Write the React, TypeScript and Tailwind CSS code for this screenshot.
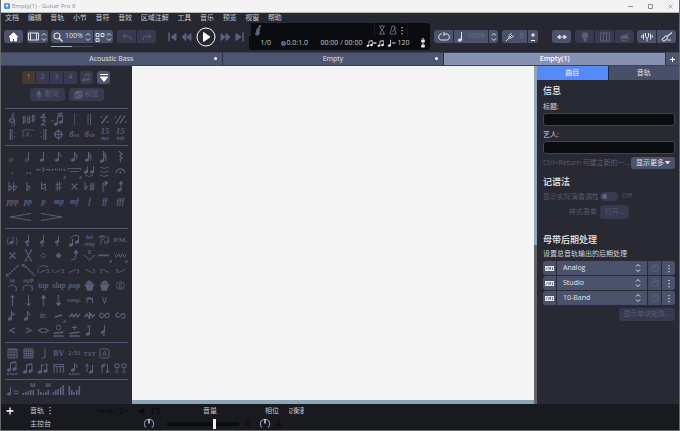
import { ReactNode, useState } from "react";
import clsx from "clsx";

type Glyph = { label: string; icon: ReactNode };

const Icon = ({
  children,
  className = "size-[15px]",
  box = "0 0 15 15",
}: {
  children: ReactNode;
  className?: string;
  box?: string;
}) => (
  <svg
    viewBox={box}
    className={clsx("shrink-0", className)}
    fill="none"
    stroke="currentColor"
    strokeWidth="1"
    aria-hidden="true"
  >
    {children}
  </svg>
);

const Note = ({
  x = 6,
  y = 11,
  stem = 8,
  flags = 0,
  open = false,
}: {
  x?: number;
  y?: number;
  stem?: number;
  flags?: number;
  open?: boolean;
}) => (
  <g>
    <ellipse
      cx={x}
      cy={y}
      rx="2"
      ry="1.4"
      transform={`rotate(-20 ${x} ${y})`}
      fill={open ? "none" : "currentColor"}
      strokeWidth={open ? 0.9 : 0.4}
    />
    {stem > 0 && <path d={`M${x + 1.5} ${y}v${-stem}`} strokeWidth="1" />}
    {Array.from({ length: flags }).map((_, i) => (
      <path
        key={i}
        d={`M${x + 1.5} ${y - stem + i * 1.8}q.5 2 2.4 3q.4 1-.3 2`}
        strokeWidth="1"
      />
    ))}
  </g>
);

const Beamed = () => (
  <g>
    <Note x={4} y={11} stem={7} />
    <Note x={9.5} y={10} stem={7} />
    <path d="M5.5 4L11 3" strokeWidth="1.4" />
  </g>
);

const g = (label: string, children: ReactNode): Glyph => ({
  label,
  icon: <Icon>{children}</Icon>,
});

const t = (label: string, className = "text-[8px] italic"): Glyph => ({
  label,
  icon: <span className={clsx("font-bold leading-none", className)}>{label}</span>,
});

const ottava = (num: string, sub: string): Glyph => ({
  label: num + sub,
  icon: (
    <span className="text-[9px] font-bold italic leading-none">
      {num}
      <span className="text-[6px]">{sub}</span>
    </span>
  ),
});

const stacked = (top: string, bottom: string, className = "text-[7px]"): Glyph => ({
  label: `${top} ${bottom}`,
  icon: (
    <span className="flex flex-col items-center text-[6px] font-bold italic leading-[7px]">
      <span className={clsx("leading-[7px]", className)}>{top}</span>
      <span>{bottom}</span>
    </span>
  ),
});

const hand = (
  <path
    d="M4 8L2.8 6.2M5 8V3.5M6.6 7V2.5M8.3 7V2.8M10 8V4M4 8h6.7L12 6.5M4.5 8.5h6l-.8 3.5H5.6z"
    strokeWidth="1.4"
    fill="currentColor"
  />
);

const bars = (heights: number[]) => (
  <g>
    {heights.map((h, i) => (
      <rect
        key={i}
        x={1.5 + i * 2.5}
        y={12 - h}
        width="1.6"
        height={h}
        fill="currentColor"
        stroke="none"
      />
    ))}
  </g>
);

const masterBars = (label: string, heights: number[]): Glyph => ({
  label,
  icon: (
    <span className="relative">
      <Icon>{bars(heights)}</Icon>
      <span className="absolute -top-px right-0 font-['Noto_Sans',sans-serif] text-[6px] font-bold leading-[6px]">
        M
      </span>
    </span>
  ),
});

const corner = <path d="M14.5 11.5v3h-3z" fill="currentColor" stroke="none" />;

const signatures: Glyph[] = [
  g("Clef", <path d="M8.2 9.5a1.5 1.5 0 1 0-2.5-1c0 2.5 4 2.5 4-.2 0-2.8-5.4-3-5.4.5 0 3.500 5.500 3 4.900-.3L7.600 2.700c0-2 1.800-2 1.400 0C8.700 4.500 5 5.500 4.300 8.500M9.200 8.500l.4 4c0 1.800-3 1.800-2.800 0" strokeWidth=".9" />),
  g("Key signature", <path d="M2.5 4v8M4 3.5v8M1.2 6.5l4-1M1.2 9.8l4-1M7 4v8M8.500 3.500v8M5.800 7.500l4-1M5.800 10.300l4-1M11.500 2.500v8M13 2v8M10.300 5.500l4-1M10.300 8.500l4-1" strokeWidth=".9" />),
  g("Time signature", <path d="M8 7V2L5 5.5h5M6 9c1-1.5 3.5-1 3 .5S6.5 12 5.500 13h4.500M8 7v1" strokeWidth="1.2" />),
  g("Triplet feel", <g><path d="M0 9h3" /><Note x={5} y={12} stem={7} /><Note x={10} y={10} stem={7} /><path d="M6.5 5l5-2M6.500 2.500l5-1.500" strokeWidth="1.4" /></g>),
  g("Free time", <path d="M7.5 2v11" strokeDasharray="1.5 1" />),
  g("Double bar", <path d="M6 2v11M8.5 2v11" strokeWidth=".9" />),
  g("Simile", <g><path d="M4.5 11.5l6-8" strokeWidth="1.4" /><circle cx="4.5" cy="5" r=".6" /><circle cx="10.5" cy="10" r=".6" /></g>),
  g("Double simile", <g><path d="M3 11.5l5-8M7 11.5l5-8" strokeWidth="1.4" /><circle cx="2.5" cy="5" r=".6" /><circle cx="12.5" cy="10" r=".6" /></g>),
  g("Repeat open", <g><path d="M5.5 2v11" strokeWidth="1.6" /><path d="M7.5 2v11" strokeWidth=".6" /><path d="M9.5 5v1.2M9.5 9v1.2" /></g>),
  g("Alternate ending", <g><path d="M2 10V3h11" strokeWidth=".8" /><path d="M5 5.5l3 4M8 5.5l-3 4M10 9h1" strokeWidth=".9" /></g>),
  g("Repeat close", <g><path d="M9.5 2v11" strokeWidth="1.6" /><path d="M7.5 2v11" strokeWidth=".6" /><path d="M5 5v1.2M5 9v1.2" /></g>),
  g("Coda", <g><circle cx="7.5" cy="7.5" r="3.3" strokeWidth="1.3" /><path d="M7.5 2v11M2.5 7.5h10" strokeWidth=".9" /></g>),
  ottava("8", "va"),
  ottava("8", "vb"),
  stacked("15", "ma", "text-[9px]"),
  stacked("15", "mb", "text-[9px]"),
];

const notes: Glyph[] = [
  g("Whole", <Note open stem={0} />),
  g("Half", <Note open />),
  g("Quarter", <Note />),
  g("Eighth", <Note flags={1} />),
  g("Sixteenth", <Note flags={2} />),
  g("Thirty-second", <Note x={5} flags={3} />),
  g("Sixty-fourth", <Note x={5} y={12} stem={10} flags={4} />),
  g("Rest", <path d="M6 2l3 3-2 2 2.5 3c-2-1-3.5.5-1.5 3" strokeWidth="1.3" />),
  g("Dotted", <circle cx="7.5" cy="9" r=".6" fill="currentColor" />),
  g("Double dotted", <path d="M5 9h1.6M8.5 9h1.6" strokeWidth="1.6" />),
  g("Triplet", <path d="M1 7V5.500h3.500M10 5.500h3.500V7M6 4h2.500L7 5.500c2 0 1.500 2-1 1.500" />),
  g("Tuplet", <g><path d="M1 7V5.500h2M12 5.500h2V7M4.500 4.500v2M6.500 4.500v2M8.500 4.500v2M10.500 4.500v2" />{corner}</g>),
  g("Custom tuplet", <g><path d="M1 6.5V4.500h13v2M3 7.500h9" strokeWidth=".8" />{corner}</g>),
  g("Tie", <g><Note x={4} y={8} stem={6} /><Note x={10} y={8} stem={6} /><path d="M3 11q4 3 8 0" strokeWidth=".8" /></g>),
  g("Tie beat", <path d="M3 3q4 3 8.500 0M3 7q4 3 8.500 0M3 11q4 3 8.500 0" strokeWidth=".9" />),
  g("Fermata", <g><path d="M3 9c1-5.500 8-5.500 9 0" strokeWidth="1.100" /><circle cx="7.5" cy="8.5" r=".7" fill="currentColor" /></g>),
  g("Double flat", <path d="M4 3v8.500c3-1.500 4-4 2-4.500l-2 1M8.500 3v8.500c3-1.500 4-4 2-4.500l-2 1" strokeWidth="1.1" />),
  g("Flat", <path d="M6 3v8.500c3-1.500 4-4 2-4.500l-2 1" strokeWidth="1.1" />),
  g("Natural", <path d="M5.500 3v7l4-1.500M9.500 12V5l-4 1.500" strokeWidth="1.1" />),
  g("Sharp", <path d="M6.200 3v9M8.500 2.500v9M4.500 6l6-1.200M4.500 9.500l6-1.200" />),
  g("Double sharp", <path d="M5 5l5 5M10 5l-5 5M4.500 5h1.500M9 5h1.500M4.500 10h1.500M9 10h1.500" strokeWidth="1.100" />),
  g("Accidental", <path d="M3 3v8c2.500-1.500 3-4 1.500-4L3 8M9 4v8M11 3.500v8M7.500 7l5-1M7.500 10l5-1" />),
  g("Stem up", <g><path d="M6 13V4h4M6 6.500h3" /><path d="M8.500 2L11 4 8.500 6z" fill="currentColor" /></g>),
  g("Stem down", <g><Note x={6.5} y={11} stem={7} /><path d="M6.500 5l1.500-3 1.500 3z" fill="currentColor" /></g>),
  t("ppp"), t("pp"), t("p"), t("mp"), t("mf"), t("f"), t("ff"), t("fff"),
];

const effects: Glyph[] = [
  g("Ghost note", <g><Note x={6.5} y={9.5} stem={6} /><path d="M3.500 4q-2.500 4 0 8M11 4q2.500 4 0 8" strokeWidth=".8" /></g>),
  g("Accent", <g><Note y={9} stem={7} /><path d="M5 11l3 1-3 1" strokeWidth=".8" /></g>),
  g("Heavy accent", <g><Note y={9} stem={7} /><path d="M5 13.500l1.500-2.500 1.500 2.500" strokeWidth=".8" /></g>),
  g("Staccato", <g><Note y={9} stem={6} /><circle cx="6.5" cy="12" r=".6" fill="currentColor" /></g>),
  g("Legato", <g><Note x={4} y={12} stem={6} /><Note x={10} y={9} stem={6} /><path d="M3.500 5q3-4 8-2.500" strokeWidth=".9" /></g>),
  stacked("let", "ring"),
  g("Pedal", <path d="M3 12c2-2 1-6 1-8 4-2 4 3 1 3M7 9c2-2 2-1 1 0s0 3 2 1M11 5c2 3 0 6-1 5s1-3 2-2M1 5c2-3 5-3 11 0" strokeWidth=".9" />),
  t("P.M.", "text-[7px]"),
  g("Dead note", <path d="M5 5l5 5M10 5l-5 5M4.500 5h1.500M9 5h1.500M4.500 10h1.500M9 10h1.500" strokeWidth="1.300" />),
  g("Mute", <path d="M4.500 2l6 11M10.500 2l-6 11M3.500 2h2M9.500 2h2M3.500 13h2M9.500 13h2" strokeWidth="1.100" />),
  g("Natural harmonic", <path d="M7.500 5l2.500 2.500-2.500 2.500L5 7.500z" strokeWidth=".9" />),
  g("Artificial harmonic", <path d="M7.500 5l2.500 2.500-2.500 2.500L5 7.500z" fill="currentColor" />),
  g("Bend", <g><path d="M4 12c4 0 5-2 5-8" strokeWidth="1.200" /><path d="M7 5l2-3 2 3z" fill="currentColor" /></g>),
  g("Whammy bar", <path d="M6 2l3 4M9 2L6 6M2 7l5.500 5L13 7" />),
  g("Vibrato", <g><path d="M1.500 8l1.500-1.500 1.500 1.500 1.500-1.500 1.500 1.500 1.500-1.500 1.500 1.500 1.500-1.500" strokeWidth="1.200" />{corner}</g>),
  g("Wide vibrato", <g><path d="M1.500 5.500l2 4 2-4 2 4 2-4 2 4 2-4" />{corner}</g>),
  g("Slide in below", <path d="M4 11L14 2M1 11l2.500 3M3.500 11L1 14" strokeDasharray="2.5 .6" strokeWidth="1.300" />),
  g("Slide in above", <path d="M4 3l10 10M1 1l2.500 3M3.500 1L1 4" strokeDasharray="2.5 .6" strokeWidth="1.300" />),
  g("Legato slide", <path d="M2 6v4M4 9.500l6-2.500M11 6.500q3 0 1 1.500 2 1.500-1 2M3 4q4-3 9 0" strokeWidth=".9" />),
  g("Shift slide", <path d="M2 6v4M4 9.500l6-2.500M11 6.500q3 0 1 1.500 2 1.500-1 2" strokeWidth=".9" />),
  g("Slide in", <path d="M2 9.500l7-3M10 6.500q3 0 1 1.500 2 1.500-1 2" strokeWidth=".9" />),
  g("Slide down in", <path d="M3 6l7 3.500M11 6.500q3 0 1 1.500 2 1.500-1 2" strokeWidth=".9" />),
  g("Slide out down", <path d="M3 6.500q3 0 1 1.500 2 1.500-1 2M6 6.500l6 3" strokeWidth=".9" />),
  g("Slide out up", <path d="M3 6.500q3 0 1 1.500 2 1.500-1 2M6 9.500l6-3" strokeWidth=".9" />),
  g("Hammer on", <path d="M6 1v4M9 1v4M6 3h3M3 9q4-4 8 0M10 9.500q3 0 1 1.500 2 1.500-1 2" strokeWidth=".9" />),
  g("Pull off", <path d="M3 1v4M6 1v4M3 3h3M7 5l2-4M10 5V1h2v2h-2M2 9q5-4 10 0M2 9v4M10 9.500q3 0 1 1.500 2 1.500-1 2" strokeWidth=".9" />),
  t("tap"), t("slap"), t("pop"),
  g("Left hand", hand),
  g("Right hand", <g transform="translate(15 0) scale(-1 1)">{hand}</g>),
  g("String number", <g><circle cx="7.5" cy="7.5" r="4" strokeWidth=".8" /><path d="M9 5q-3 0-3 3.500a1.500 1.300 0 1 0 1.500-1" strokeWidth=".9" /></g>),
  g("Arpeggio up", <path d="M7.500 13V3M5.500 5l2-3 2 3" />),
  g("Arpeggio down", <path d="M7.500 2v10M5.500 10l2 3 2-3" />),
  g("Brush up", <g><path d="M7.500 13V4" strokeDasharray="1.5 .6" strokeWidth="1.6" /><path d="M5.500 5l2-3 2 3z" fill="currentColor" /></g>),
  g("Brush down", <g><path d="M7.500 2v9" strokeDasharray="1.5 .6" strokeWidth="1.6" /><path d="M5.500 10l2 3 2-3z" fill="currentColor" /></g>),
  t("rasg.", "text-[7px] italic"),
  g("Pick down", <g><path d="M5 10V5.500h5.500V10" /><path d="M5 5.500h5.500" strokeWidth="2" /></g>),
  g("Pick up", <path d="M5.500 4l2 6.500 2-6.500" />),
  { label: "", icon: null },
  g("Grace note before", <g><Note x={5} flags={1} /><path d="M3.500 8.500l7-3" strokeWidth=".7" /></g>),
  g("Grace note", <Note x={5} flags={1} />),
  t("tr.", "text-[8px] italic"),
  g("Tremolo", <g><path d="M4 9l7-2" strokeWidth="1.700" />{corner}</g>),
  g("Upper mordent", <path d="M2.500 9l2.500-3 1.500 3 2.500-3 1.500 3 2.500-3" strokeWidth="1.400" />),
  g("Lower mordent", <path d="M2.500 9l2.500-3 1.500 3 2.500-3 1.500 3 2.500-3M7.500 4v7" strokeWidth="1.300" />),
  g("Turn", <path d="M7.500 7.500C5 4 2.500 5 3 8s3 2 4.500-.5S12 4 12 7s-2.500 4-4.500.5z" strokeWidth="1.200" />),
  g("Inverted turn", <path d="M6 5.500C4 4 3 6 3 7.500c0 2 3 2.500 4.500 0S12 5 12 7.500 10 11 8.500 9.500" strokeWidth="1.200" />),
  g("Crescendo", <path d="M10 5L5 7.500 10 10" strokeWidth="1.200" />),
  g("Decrescendo", <path d="M5 5l5 2.500L5 10" strokeWidth="1.200" />),
  g("Swell", <path d="M7 5L2.500 7.500 7 10M8 5l4.500 2.500L8 10" strokeWidth="1.100" />),
  g("Pedal open", <g><circle cx="7.5" cy="4.500" r="2.300" /><path d="M2.500 10.500L12.500 9M2.500 13h10" strokeWidth="1.600" /></g>),
  g("Pedal closed", <g><path d="M7.500 2v5M5 4.500h5" /><path d="M2.500 10.500L12.500 9M2.500 13h10" strokeWidth="1.600" /></g>),
  g("Golpe up", <g><Note y={11} stem={6} /><path d="M5.500 2l3 3M8.500 2l-3 3" /></g>),
  g("Golpe down", <g><Note y={9} stem={7} /><path d="M5.500 11l2.500 2.500M8 11l-2.500 2.500" strokeWidth=".8" /></g>),
];

const texts: Glyph[] = [
  g("Chord", <path d="M3 3h9v9H3zM6 3v9M9 3v9M3 6h9M3 9h9M3 3.500h9" />),
  g("Diagram", <path d="M3 3h9v9H3zM5.200 3v9M7.500 3v9M9.800 3v9M3 5.200h9M3 7.500h9M3 9.800h9" />),
  g("Slash", <path d="M9 2.500v8.500l-3 1.500" strokeWidth="1.100" />),
  t("BV", "text-[8px]"),
  t("2:51", "text-[7px]"),
  t("TXT", "text-[6px]"),
  g("Section", <g><rect x="3" y="3" width="9" height="9" rx="1.500" /><path d="M5.500 10l2-5 2 5M6.300 8.300h2.500" strokeWidth=".9" /></g>),
  { label: "", icon: null },
  g("Auto beam", <g><g transform="translate(0 -2)"><Beamed /></g><path d="M2 13h11" strokeWidth="1.6" strokeDasharray="2 .7" /></g>),
  g("Beam", <Beamed />),
  g("Break beam", <g><Note x={4} y={11} stem={7} /><Note x={9.5} y={10} stem={7} /><path d="M5.500 4h2M9 3.500h2" strokeWidth="1.400" /></g>),
  g("Beam secondary", <path d="M3 3.500h9.500M3 5.500h9.500M3 3v9M6 5v7M9.300 5v7M12.300 3v9" />),
  g("Auto stem", <g><Note x={6} y={9} stem={7} flags={1} /><path d="M2 13h11" strokeWidth="1.6" strokeDasharray="2 .7" /></g>),
  g("Stem upward", <g><path d="M5 11V4M3.500 5.500L5 3l1.500 2.500" /><Note x={9} y={11} stem={7} /></g>),
  g("Stem downward", <g><path d="M5 12V4l4-1M10.500 3v8M9 9.500l1.500 2.500L12 9.500" /><ellipse cx="6" cy="5" rx="1.500" ry="1" /></g>),
  g("Design", <path d="M2 3h4v3.500H2zM9 3h4v3.500H9zM4 6.500V10M11 6.500V10M1.500 11h4M9 11h4" />),
];

const automations: Glyph[] = [
  g("Tempo", <g><Note x={4} y={11} stem={7} /><path d="M8.500 8h5M8.500 10.500h5" /></g>),
  masterBars("Master volume", [2, 3, 4, 5, 5]),
  masterBars("Master pan", [6, 3, 2, 3, 5]),
  g("Volume", bars([3, 5, 6, 8, 10])),
  g("Pan", bars([9, 5, 3, 5, 9])),
];

const Palette = ({
  items,
  className,
  children,
}: {
  items: Glyph[];
  className?: string;
  children?: ReactNode;
}) => (
  <section className={clsx("border-t border-[#4c5874]", className)}>
    <div className="grid grid-cols-8 font-['Liberation_Serif',serif] text-[#5a5f7b]">
      {items.map((item, i) =>
        item.icon ? (
          <button
            key={i}
            aria-label={item.label}
            className="flex h-[15px] items-center justify-center whitespace-nowrap"
          >
            {item.icon}
          </button>
        ) : (
          <span key={i} />
        ),
      )}
      {children}
    </div>
  </section>
);

const UpDown = () => (
  <Icon box="0 0 6 10" className="h-[10px] w-[6px]">
    <path d="M1 3.500l2-2 2 2M1 6.500l2 2 2-2" />
  </Icon>
);

const Dots = () => (
  <Icon box="0 0 4 9" className="h-[9px] w-1">
    <path d="M2 1v1.200M2 4v1.200M2 7v1.200" strokeWidth="1.200" />
  </Icon>
);

const toolButton = "flex h-[13px] shrink-0 items-center justify-center bg-[#4a526c]";
const dimButton = "flex h-[13px] shrink-0 items-center justify-center bg-[#383b4f] text-[#5a5f78]";

const MenuBar = () => (
  <nav className="h-[10px] px-1">
    <ul className="flex w-[277px] items-center justify-between text-[7px] leading-[10px] text-[#c9cad0]">
      {["文档", "编辑", "音轨", "小节", "音符", "音效", "区域注解", "工具", "音乐", "预览", "视窗", "帮助"].map(
        (name) => (
          <li key={name}>
            <button className="block">{name}</button>
          </li>
        ),
      )}
    </ul>
  </nav>
);

const Transport = () => (
  <div className="flex items-center gap-1 text-[#5a607d]">
    <button aria-label="First bar">
      <Icon box="0 0 9 10" className="h-[10px] w-[9px]">
        <path d="M1 .5v9" strokeWidth="1.500" />
        <path d="M8 1.500v7L3 5z" fill="currentColor" />
      </Icon>
    </button>
    <button aria-label="Previous bar">
      <Icon box="0 0 11 10" className="h-[10px] w-[11px]">
        <path d="M5 1.500v7L1 5zM10 1.500v7L6 5z" fill="currentColor" />
      </Icon>
    </button>
    <button aria-label="Play" className="text-white">
      <Icon box="0 0 20 20" className="size-5">
        <circle cx="10" cy="10" r="9" />
        <path d="M7.500 5.500v9L14 10z" fill="currentColor" />
      </Icon>
    </button>
    <button aria-label="Next bar">
      <Icon box="0 0 11 10" className="h-[10px] w-[11px]">
        <path d="M1 1.500v7l4-3.500zM6 1.500v7l4-3.500z" fill="currentColor" />
      </Icon>
    </button>
    <button aria-label="Last bar">
      <Icon box="0 0 9 10" className="h-[10px] w-[9px]">
        <path d="M8 .5v9" strokeWidth="1.500" />
        <path d="M1 1.500v7l5-3.500z" fill="currentColor" />
      </Icon>
    </button>
  </div>
);

const Display = () => (
  <div className="flex h-[27px] w-[181px] flex-col rounded-[3px] bg-[#0b0c10] text-[7px] text-[#c6c7cc]">
    <div className="flex h-[14px] items-center">
      <div className="h-3 w-[2px] bg-[#202634]" />
      <Icon className="ml-[3px] h-[11px] w-2 text-[#5d6480]" box="0 0 8 11">
        <path d="M6.500 0L4.500 4" strokeWidth="2" />
        <path d="M3 4h2.500L5 6.500l.5 2L3 10.500 1.500 9 2.500 7z" fill="currentColor" />
      </Icon>
      <div className="ml-auto flex h-[14px] w-[34px] items-center justify-between border-x border-[#181a22] px-[3px] text-[#626783]">
        <Icon box="0 0 8 10" className="h-[10px] w-2">
          <path d="M1 1h6M1 9h6M2 1c0 3 4 5 4 8M6 1c0 3-4 5-4 8" />
        </Icon>
        <Icon box="0 0 8 10" className="h-[10px] w-2">
          <path d="M3 1h2l2 8H1zM3.500 7L7 2" />
        </Icon>
        <span className="text-[#d0d1d6]">
          <Dots />
        </span>
      </div>
      <div className="w-[22px]" />
    </div>
    <div className="flex h-3 items-center whitespace-nowrap">
      <span className="ml-3 w-5">1/0</span>
      <span className="flex w-[40px] items-center gap-px">
        <Icon box="0 0 5 5" className="size-[5px] text-[#717896]">
          <circle cx="2.5" cy="2.5" r="2" fill="#4f5672" />
        </Icon>
        0.0:1.0
      </span>
      <span>00:00 / 00:00</span>
      <span className="ml-auto flex items-center text-white">
        <Icon box="1 2 11 11" className="size-[7px]">
          <Beamed />
        </Icon>
        =
        <Icon box="1 2 11 11" className="size-[7px]">
          <Beamed />
        </Icon>
      </span>
      <span className="ml-[3px] flex items-center">
        <Icon box="3 2 6 11" className="h-2 w-[5px] text-white">
          <Note />
        </Icon>
        = 120
      </span>
      <Icon box="0 0 6 10" className="ml-[10px] mr-1 h-[10px] w-[6px] text-white">
        <path d="M3 0v10M1 2l4 2M1 4l4-2M1 7l4 2M1 9l4-2" />
      </Icon>
    </div>
  </div>
);

const Toolbar = () => (
  <div className="flex h-[29px] items-center px-[3px] pb-[2px] text-[#dfe0e6]">
    <button aria-label="Home" className={clsx(toolButton, "w-[19px] rounded-[3px] text-white")}>
      <Icon box="0 0 11 10" className="h-[10px] w-[11px]">
        <path d="M5.500.8L1 5h1.500v4h2V6.500h2V9h2V5H10z" fill="currentColor" />
      </Icon>
    </button>
    <button aria-label="Layout" className={clsx(toolButton, "ml-1 w-[21px] gap-[2px] rounded-[3px]")}>
      <Icon box="0 0 11 9" className="h-[9px] w-[11px]">
        <path d="M.5 1h10v7H.5zM2.500 1v7M8.500 1v7" />
      </Icon>
      <UpDown />
    </button>
    <div className="relative ml-[3px] flex gap-px">
      <label className={clsx(toolButton, "w-[42px] rounded-l-[3px]")}>
        <Icon box="0 0 10 10" className="size-[10px]">
          <circle cx="4" cy="4" r="3" strokeWidth="1.2" />
          <path d="M6 6l3.500 3.500" strokeWidth="1.5" />
        </Icon>
        <select aria-label="Zoom" className="ml-[2px] w-5 appearance-none text-[7px]">
          <option>100%</option>
        </select>
        <UpDown />
      </label>
      <button aria-label="View" className={clsx(toolButton, "w-[19px] gap-px rounded-r-[3px]")}>
        <Icon box="0 0 10 10" className="size-[10px]">
          <path d="M1 1.500h3v3H1zM6 1.500h3v3H6zM1 6.500h3v3H1z" />
        </Icon>
        <UpDown />
      </button>
      <div className="absolute -bottom-1 left-0 h-px w-[42px] bg-[#454957]">
        <div className="h-px w-1/2 bg-[#a6a8b1]" />
      </div>
    </div>
    <div className="ml-1 flex gap-px">
      <button aria-label="Undo" className={clsx(dimButton, "w-[19px] rounded-l-[3px]")}>
        <Icon box="0 0 10 8" className="h-2 w-[10px]">
          <path d="M3.500 1L1 3.200l2.500 2.300M1 3.200h5.500q2.500 0 2.500 4" />
        </Icon>
      </button>
      <button aria-label="Redo" className={clsx(dimButton, "w-[19px] rounded-r-[3px]")}>
        <Icon box="0 0 10 8" className="h-2 w-[10px]">
          <path d="M6.500 1L9 3.200 6.500 5.500M9 3.200H3.500Q1 3.200 1 7.200" />
        </Icon>
      </button>
    </div>
    <div className="ml-3">
      <Transport />
    </div>
    <div className="mx-auto px-1">
      <Display />
    </div>
    <div className="flex gap-px">
      <button aria-label="Loop" className={clsx(toolButton, "w-[19px] rounded-l-[3px]")}>
        <Icon box="0 0 12 9" className="h-[9px] w-3">
          <path d="M4 2H3C0 2 0 8 3 8h6c3 0 3-6 0-6H6M6 0v4" />
        </Icon>
      </button>
      <div className={clsx(toolButton, "w-[34px] gap-1")}>
        <Icon box="3 2 6 11" className="h-[11px] w-[6px]">
          <Note />
        </Icon>
        <span className="text-[7px] text-[#6e738a]">100%</span>
      </div>
      <button aria-label="Speed" className={clsx(toolButton, "w-[9px] rounded-r-[3px]")}>
        <UpDown />
      </button>
    </div>
    <div className="ml-1 flex gap-px">
      <div className={clsx(toolButton, "w-[25px] gap-1 rounded-l-[3px]")}>
        <Icon box="0 0 10 10" className="size-[10px]">
          <path d="M1 9l3-3M4 6Q3 4 6.500 1M4 6q2 1 5-2.500M5 5l2-2" />
        </Icon>
        <span className="text-[7px] text-[#6e738a]">0</span>
      </div>
      <button aria-label="Transpose" className={clsx(toolButton, "w-[10px] rounded-r-[3px] text-white")}>
        <Icon box="0 0 6 10" className="h-[10px] w-[6px]">
          <path d="M3 1v4M1 3h4M1 8.500h4" />
        </Icon>
      </button>
    </div>
    <button aria-label="Fit" className={clsx(toolButton, "ml-[14px] w-[19px] rounded-[3px]")}>
      <Icon box="0 0 12 8" className="h-2 w-3">
        <path d="M4 2L1.500 4 4 6zM8 2l2.500 2L8 6zM3 4h6" fill="currentColor" />
      </Icon>
    </button>
    <div className="ml-1 flex gap-px">
      <button aria-label="Fretboard" className={clsx(dimButton, "w-[19px] rounded-l-[3px]")}>
        <Icon box="0 0 8 10" className="h-[10px] w-2">
          <path d="M2 1h4l1 4-2 1v3H3V6L1 5z" fill="currentColor" />
        </Icon>
      </button>
      <button aria-label="Keyboard" className={clsx(dimButton, "w-[19px]")}>
        <Icon box="0 0 10 10" className="size-[10px]">
          <path d="M.5 1h9v8h-9zM3.500 1v8M6.500 1v8" />
        </Icon>
      </button>
      <button aria-label="Drums" className={clsx(dimButton, "w-[19px] rounded-r-[3px]")}>
        <Icon box="0 0 10 10" className="size-[10px]">
          <path d="M1 5v3q4 2 7 0V5M4 4l5-3" />
          <ellipse cx="4.5" cy="5" rx="3.5" ry="1.5" fill="currentColor" />
        </Icon>
      </button>
    </div>
    <div className="ml-[3px] flex gap-px">
      <button aria-label="Tuner" className={clsx(toolButton, "w-[19px] rounded-l-[3px]")}>
        <Icon box="0 0 12 10" className="h-[10px] w-3">
          <path d="M6 9.500V6M4.500 1v4q1.500 2 3 0V1M2.500 1.500v6M.8 3v3M9.500 1.500v6M11.200 3v3" />
        </Icon>
      </button>
      <button aria-label="Audio" className={clsx(toolButton, "w-[19px] rounded-r-[3px]")}>
        <Icon box="0 0 12 10" className="h-[10px] w-3">
          <path d="M11 .5L6 4.500" strokeWidth="1.2" />
          <path d="M4 4l2 0 1 2-2 1-1 2H2L1 7l2-1z" />
          <path d="M6 8h4" />
        </Icon>
      </button>
    </div>
  </div>
);

const DocumentTabs = () => {
  const [current, setCurrent] = useState("Empty(1)");
  return (
    <div className="flex h-[14px] gap-px border-y border-[#3b4258] bg-[#2d3142] text-[7px] text-[#e0e2e8]">
      {["Acoustic Bass", "Empty", "Empty(1)"].map((name) => (
        <button
          key={name}
          onClick={() => setCurrent(name)}
          className={clsx(
            "relative flex-1 text-center leading-3",
            name === current ? "bg-[#8590b3] font-semibold text-white" : "bg-[#4d5671] font-medium",
          )}
        >
          {name}
          {name !== current && (
            <span className="absolute right-[5px] top-1 size-[3px] rounded-full bg-white" />
          )}
        </button>
      ))}
      <button aria-label="New tab" className="flex w-[13px] items-center justify-center bg-[#4d5671] text-white">
        <Icon box="0 0 5 5" className="size-[5px]">
          <path d="M2.500 0v5M0 2.500h5" />
        </Icon>
      </button>
    </div>
  );
};

const EditionPalette = () => (
  <aside className="w-[131px] shrink-0 bg-[#282933] px-1">
    <div className="flex items-center gap-[2px] pl-[17px] pt-[5px] text-[7px]">
      <div className="flex gap-px">
        {["1", "2", "3", "4"].map((voice) => (
          <button
            key={voice}
            className={clsx(
              "h-[13px] w-[13px] first:rounded-l-[3px] last:rounded-r-[3px]",
              voice === "1" ? "bg-[#453a32] text-[#ae7c43]" : "bg-[#383b4f] text-[#666b88]",
            )}
          >
            {voice}
          </button>
        ))}
      </div>
      <button aria-label="Multivoice" className={clsx(dimButton, "ml-px w-[13px] rounded-[3px]")}>
        <Icon className="size-[11px]">
          <Beamed />
        </Icon>
      </button>
      <button
        aria-label="Design mode"
        className="ml-[2px] flex h-[13px] w-[13px] items-center justify-center rounded-[3px] bg-[#4d5571] text-white"
      >
        <Icon box="0 0 10 10" className="size-[10px]">
          <path d="M1 1.500h8" />
          <path d="M1.500 4h7L5 8.500z" fill="currentColor" />
        </Icon>
      </button>
    </div>
    <div className="flex justify-center gap-1 pb-[7px] pt-1 text-[7px]">
      <button className={clsx(dimButton, "w-[35px] gap-[3px] rounded-[3px]")}>
        <Icon box="0 0 7 10" className="h-[9px] w-[6px]">
          <rect x="2" y="1" width="3" height="5" rx="1.5" fill="currentColor" />
          <path d="M.5 4q0 4 3 4t3-4M3.500 8v2" />
        </Icon>
        歌词
      </button>
      <button className={clsx(dimButton, "w-[35px] gap-[2px] rounded-[3px]")}>
        <Icon box="0 0 9 9" className="size-[9px]">
          <path d="M1 3h5v5H1zM2.500 3V1.500H8v5H6M3 5h2M3 6.500h2" strokeWidth="1.400" />
        </Icon>
        和弦
      </button>
    </div>
    <Palette items={signatures} className="py-[3px]" />
    <Palette items={notes} className="pb-1 pt-[3px]">
      <button aria-label="Hairpin crescendo" className="col-span-2 flex h-[15px] items-center justify-center">
        <Icon box="0 0 23 8" className="h-2 w-[23px]">
          <path d="M22 .5L1 4l21 3.500" />
        </Icon>
      </button>
      <button aria-label="Hairpin decrescendo" className="col-span-2 flex h-[15px] items-center justify-center">
        <Icon box="0 0 23 8" className="h-2 w-[23px]">
          <path d="M1 .5L22 4 1 7.500" />
        </Icon>
      </button>
    </Palette>
    <Palette items={effects} className="py-1" />
    <Palette items={texts} className="py-[3px]" />
    <Palette items={automations} className="py-[3px]" />
  </aside>
);

const Field = ({ id, label }: { id: string; label: string }) => (
  <>
    <label htmlFor={id} className="block pt-[3px] text-[7px] leading-[12px] text-[#d4d5da]">
      {label}
    </label>
    <input
      id={id}
      className="block h-[13px] w-full rounded-[3px] border border-[#3f4355] bg-[#0b0c10] px-1 text-[7px]"
    />
  </>
);

const Heading = ({ children }: { children: ReactNode }) => (
  <h2 className="text-[9px] font-medium leading-[14px] text-[#e8e9ee]">{children}</h2>
);

const Inspector = () => (
  <aside className="w-[142px] shrink-0 bg-[#282933]">
    <div className="grid grid-cols-2 gap-px text-[7px] leading-[14px] text-[#e2e4ea]">
      <button className="bg-[#548bf8] text-white">曲目</button>
      <button className="bg-[#484f68]">音轨</button>
    </div>
    <div className="pl-[6px] pr-1 pt-1">
      <Heading>信息</Heading>
      <Field id="title" label="标题:" />
      <Field id="artist" label="艺人:" />
      <div className="mt-[3px] flex items-center justify-between whitespace-nowrap">
        <span className="text-[7px] leading-3 text-[#5a5f72]">Ctrl+Return 可建立新的一...</span>
        <button className="flex h-3 w-11 items-center justify-center gap-px rounded-[3px] bg-[#4a526c] text-[7px] text-[#e2e3e8]">
          显示更多
          <Icon box="0 0 5 4" className="h-1 w-[5px]">
            <path d="M.5 .5h4L2.500 3z" fill="currentColor" />
          </Icon>
        </button>
      </div>
      <div className="pt-[6px]">
        <Heading>记谱法</Heading>
      </div>
      <div className="grid grid-cols-[56px_1fr] items-center gap-x-px gap-y-[2px] pt-px text-[7px] text-[#555970]">
        <label htmlFor="concert" className="whitespace-nowrap leading-[13px]">
          显示实际演奏调性
        </label>
        <span className="flex items-center gap-1">
          <input
            id="concert"
            type="checkbox"
            role="switch"
            className="h-[9px] w-[18px] appearance-none rounded-full bg-[#383c50] p-[2px] before:block before:size-[5px] before:rounded-full before:bg-[#626884]"
          />
          Off
        </span>
        <span className="pr-[2px] text-right">样式表单</span>
        <button className="h-[14px] w-[29px] rounded-[3px] bg-[#353a4e]">打开...</button>
      </div>
      <div className="pt-[14px]">
        <Heading>母带后期处理</Heading>
      </div>
      <p className="text-[7px] leading-[14px] text-[#d4d5da]">设置总音轨输出的后期处理</p>
      <ul className="flex flex-col gap-px">
        {["Analog", "Studio", "10-Band"].map((name) => (
          <li key={name} className="flex h-[14px] gap-px overflow-hidden rounded-[3px] text-[7px] text-[#e4e5ea]">
            <button aria-label={`${name} rack`} className="flex w-[13px] items-center justify-center bg-[#4a526c]">
              <Icon box="0 0 9 5" className="h-[5px] w-[9px]">
                <path d="M0 0h9v5H0z" fill="#e4e5ea" stroke="none" />
                <path d="M1 3.500l1.500-2M4 1v3M5.500 1v2.500M7.500 1.500V4" stroke="#4a526c" strokeWidth=".8" />
              </Icon>
            </button>
            <label className="flex min-w-0 flex-1 items-center bg-[#4a526c] px-[6px]">
              <select aria-label={`${name} module`} className="min-w-0 flex-1 appearance-none">
                <option>{name}</option>
              </select>
              <UpDown />
            </label>
            <button
              aria-label={`${name} power`}
              className="flex w-[13px] items-center justify-center bg-[#464e66] text-[#5a6b7b]"
            >
              <Icon box="0 0 8 8" className="size-2">
                <circle cx="4" cy="4" r="3.4" strokeWidth=".8" />
                <path d="M4 1.500v2.500" />
              </Icon>
            </button>
            <button aria-label={`${name} options`} className="flex w-[13px] items-center justify-center bg-[#4a526c]">
              <Dots />
            </button>
          </li>
        ))}
      </ul>
      <button className="ml-auto mt-[3px] block h-[13px] w-14 rounded-[3px] bg-[#353a4e] text-[7px] text-[#585d75]">
        显示单块矩阵...
      </button>
    </div>
  </aside>
);

const Knob = ({ label }: { label: string }) => (
  <button aria-label={label} className="text-[#8492ba]">
    <Icon box="0 0 12 11" className="h-[11px] w-3">
      <path d="M3 9.500A4.700 4.700 0 1 1 9 9.500" strokeWidth="1.1" />
      <path d="M6 1v4.500" stroke="white" strokeWidth="1.2" />
    </Icon>
  </button>
);

const TrackPanel = () => (
  <footer className="h-[26px] bg-[#191a20] text-[7px] leading-[13px] text-[#c5c6cc]">
    <div className="flex h-[13px] items-center">
      <button aria-label="Add track" className="ml-[5px] text-white">
        <Icon box="0 0 8 8" className="size-2">
          <path d="M4 .5v7M.5 4h7" strokeWidth="1.3" />
        </Icon>
      </button>
      <span className="ml-4 w-[18px]">音轨</span>
      <Dots />
      <div className="ml-[46px] flex w-[105px] items-center text-[#0c0d10]">
        <Icon box="0 0 16 6" className="h-[6px] w-4">
          <path d="M1 1.500l3 3 3-3M9 4.500l3-3 3 3" strokeWidth="1.3" />
        </Icon>
        <Icon box="0 0 8 8" className="ml-[6px] size-2">
          <path d="M3 1H1v6h2M2 4h6" />
        </Icon>
        <Icon box="0 0 9 8" className="ml-[10px] h-2 w-[9px]">
          <path d="M1 3h2l3-2v6L3 5H1zM1 7.500L8 .5" fill="currentColor" />
        </Icon>
        <Icon box="0 0 9 8" className="ml-1 h-2 w-[9px]">
          <path d="M1 5q0-4 3.500-4T8 5M1.500 4.500v3M7.500 4.500v3" strokeWidth="1.5" />
        </Icon>
      </div>
      <span className="w-[62px]">音量</span>
      <span className="w-6">相位</span>
      <span className="flex w-[15px] justify-center overflow-hidden whitespace-nowrap">匀衡器</span>
    </div>
    <div className="flex h-[13px] items-center">
      <span className="ml-[29px] w-[113px]">主控台</span>
      <Knob label="Master gain" />
      <input
        type="range"
        aria-label="Master volume"
        defaultValue={66}
        className="ml-3 h-[11px] w-[72px] appearance-none bg-transparent [&::-webkit-slider-runnable-track]:h-1 [&::-webkit-slider-runnable-track]:bg-[#0b0c0f] [&::-webkit-slider-thumb]:-mt-[3px] [&::-webkit-slider-thumb]:h-[10px] [&::-webkit-slider-thumb]:w-[3px] [&::-webkit-slider-thumb]:appearance-none [&::-webkit-slider-thumb]:bg-[#f0f0f0]"
      />
      <span className="ml-[6px] w-[14px] text-[8px] font-bold text-[#0c0d10]">A</span>
      <Knob label="Master pan" />
      <span className="ml-[5px] text-[8px] font-bold text-[#0c0d10]">A</span>
    </div>
  </footer>
);

const TitleBar = () => (
  <header className="flex h-[13px] items-center border-b border-[#b5b5b8] bg-[#f3f3f3] pl-[3px] pr-[6px] text-[#8d8d8f]">
    <Icon box="0 0 6 6" className="size-[6px]">
      <rect width="6" height="6" rx="1.5" fill="#3b9ae8" stroke="none" />
      <path d="M2 1.500h2v1.500L3 4.500 2 3z" fill="white" stroke="none" />
    </Icon>
    <h1 className="ml-[2px] text-[6px] leading-3">Empty(1) - Guitar Pro 8</h1>
    <div className="ml-auto flex gap-[15px]">
      <button aria-label="Minimize">
        <Icon box="0 0 5 5" className="size-[5px]">
          <path d="M0 2.500h5" />
        </Icon>
      </button>
      <button aria-label="Maximize">
        <Icon box="0 0 5 5" className="size-[5px]">
          <path d="M.5 .5h4v4h-4z" />
        </Icon>
      </button>
      <button aria-label="Close">
        <Icon box="0 0 5 5" className="size-[5px]">
          <path d="M.5 .5l4 4M4.500 .5l-4 4" strokeWidth=".8" />
        </Icon>
      </button>
    </div>
  </header>
);

const App = () => {
  return (
    <div className="flex min-h-screen flex-col border-x border-b border-[#68696c] bg-[#262731] font-['Open_Sans','Noto_Sans_CJK_SC',sans-serif]">
      <TitleBar />
      <MenuBar />
      <Toolbar />
      <DocumentTabs />
      <div className="flex flex-1">
        <EditionPalette />
        <main className="flex min-w-0 flex-1 flex-col">
          <div className="flex-1 bg-[#f4f4f4]" />
          <div className="h-1 bg-[#8fa4b5]" />
        </main>
        <div className="flex w-[3px] flex-col bg-[#626365]">
          <div className="h-[53%] bg-[#8fa6ba]" />
        </div>
        <Inspector />
      </div>
      <TrackPanel />
    </div>
  );
};

export default App;
